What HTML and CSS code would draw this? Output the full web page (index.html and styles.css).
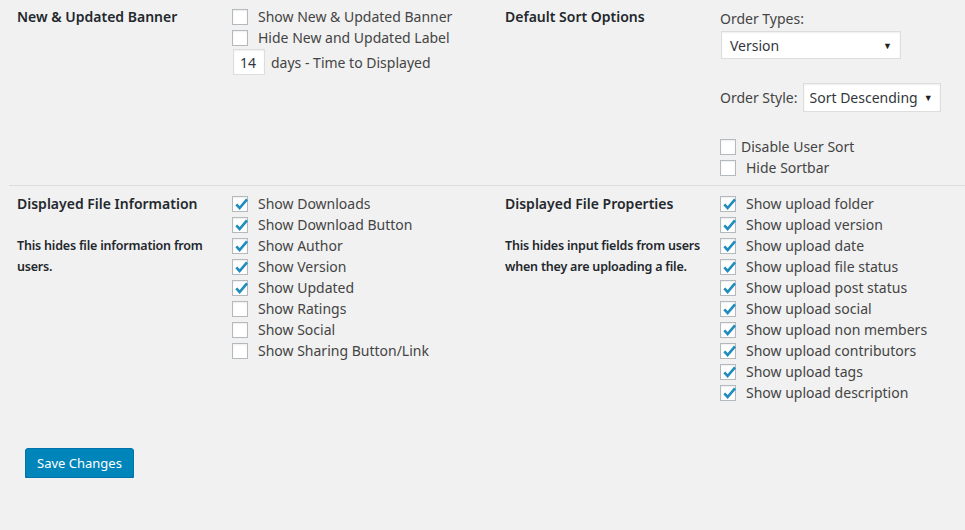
FILE: index.html
```html
<!DOCTYPE html>
<html lang="en">
<head>
  <meta charset="UTF-8" />
  <title>Settings</title>
  <link rel="stylesheet" href="styles.css">
</head>
<body>
  <form class="settings">
    <div class="row first">
      <div class="th">New &amp; Updated Banner</div>
      <div class="td">
        <label class="check"><span class="box"></span>Show New &amp; Updated Banner</label>
        <label class="check"><span class="box"></span>Hide New and Updated Label</label>
        <div class="days">
          <input type="text" class="small-input" value="14" />
          <span>days - Time to Displayed</span>
        </div>
      </div>
      <div class="th">Default Sort Options</div>
      <div class="td">
        <div class="field-label">Order Types:</div>
        <div class="select wide">Version<span class="arrow">&#9660;</span></div>
        <div class="order-style">
          <span>Order Style:</span>
          <div class="select">Sort Descending<span class="arrow">&#9660;</span></div>
        </div>
        <div class="sort-checks">
          <label class="check tight"><span class="box"></span>Disable User Sort</label>
          <label class="check"><span class="box"></span>Hide Sortbar</label>
        </div>
      </div>
    </div>

    <div class="row">
      <div class="th">
        Displayed File Information
        <p class="desc">This hides file information from users.</p>
      </div>
      <div class="td">
        <label class="check"><span class="box on"><svg viewBox="0 0 16 16"><path d="M3.3 7.4 L6.6 11 L14 2.3"/></svg></span>Show Downloads</label>
        <label class="check"><span class="box on"><svg viewBox="0 0 16 16"><path d="M3.3 7.4 L6.6 11 L14 2.3"/></svg></span>Show Download Button</label>
        <label class="check"><span class="box on"><svg viewBox="0 0 16 16"><path d="M3.3 7.4 L6.6 11 L14 2.3"/></svg></span>Show Author</label>
        <label class="check"><span class="box on"><svg viewBox="0 0 16 16"><path d="M3.3 7.4 L6.6 11 L14 2.3"/></svg></span>Show Version</label>
        <label class="check"><span class="box on"><svg viewBox="0 0 16 16"><path d="M3.3 7.4 L6.6 11 L14 2.3"/></svg></span>Show Updated</label>
        <label class="check"><span class="box"></span>Show Ratings</label>
        <label class="check"><span class="box"></span>Show Social</label>
        <label class="check"><span class="box"></span>Show Sharing Button/Link</label>
      </div>
      <div class="th">
        Displayed File Properties
        <p class="desc">This hides input fields from users when they are uploading a file.</p>
      </div>
      <div class="td">
        <label class="check"><span class="box on"><svg viewBox="0 0 16 16"><path d="M3.3 7.4 L6.6 11 L14 2.3"/></svg></span>Show upload folder</label>
        <label class="check"><span class="box on"><svg viewBox="0 0 16 16"><path d="M3.3 7.4 L6.6 11 L14 2.3"/></svg></span>Show upload version</label>
        <label class="check"><span class="box on"><svg viewBox="0 0 16 16"><path d="M3.3 7.4 L6.6 11 L14 2.3"/></svg></span>Show upload date</label>
        <label class="check"><span class="box on"><svg viewBox="0 0 16 16"><path d="M3.3 7.4 L6.6 11 L14 2.3"/></svg></span>Show upload file status</label>
        <label class="check"><span class="box on"><svg viewBox="0 0 16 16"><path d="M3.3 7.4 L6.6 11 L14 2.3"/></svg></span>Show upload post status</label>
        <label class="check"><span class="box on"><svg viewBox="0 0 16 16"><path d="M3.3 7.4 L6.6 11 L14 2.3"/></svg></span>Show upload social</label>
        <label class="check"><span class="box on"><svg viewBox="0 0 16 16"><path d="M3.3 7.4 L6.6 11 L14 2.3"/></svg></span>Show upload non members</label>
        <label class="check"><span class="box on"><svg viewBox="0 0 16 16"><path d="M3.3 7.4 L6.6 11 L14 2.3"/></svg></span>Show upload contributors</label>
        <label class="check"><span class="box on"><svg viewBox="0 0 16 16"><path d="M3.3 7.4 L6.6 11 L14 2.3"/></svg></span>Show upload tags</label>
        <label class="check"><span class="box on"><svg viewBox="0 0 16 16"><path d="M3.3 7.4 L6.6 11 L14 2.3"/></svg></span>Show upload description</label>
      </div>
    </div>

    <div class="actions">
      <button type="submit" class="button-primary">Save Changes</button>
    </div>
  </form>
</body>
</html>
```

FILE: styles.css
```css
* {
  margin: 0;
  padding: 0;
  box-sizing: border-box;
}

body {
  background: #f1f1f1;
  color: #444;
  font-family: 'Noto Sans', 'Open Sans', sans-serif;
  font-size: 14px;
  line-height: 21px;
}

.settings {
  padding-left: 9px;
}

.row {
  display: grid;
  grid-template-columns: 215px 273px 215px 1fr;
  padding: 7px 0 8px;
  border-top: 1px solid #ddd;
}

.row.first {
  border-top: none;
  padding: 6px 0 7px;
}

.th {
  padding-left: 8px;
  color: #23282d;
  font-weight: 600;
}

.td {
  padding-left: 8px;
}

.desc {
  margin-top: 21px;
  font-size: 12.5px;
  line-height: 21px;
  letter-spacing: -0.2px;
}

.check {
  display: flex;
  align-items: center;
  height: 21px;
  white-space: nowrap;
  cursor: pointer;
}

.box {
  width: 16px;
  height: 16px;
  margin-right: 10px;
  flex: none;
  background: #fff;
  border: 1px solid #b4b9be;
  box-shadow: inset 0 1px 2px rgba(0, 0, 0, 0.07);
  position: relative;
}

.box svg {
  position: absolute;
  left: 0;
  top: 0;
  width: 16px;
  height: 16px;
}

.box svg path {
  fill: none;
  stroke: #1e8cbe;
  stroke-width: 2.6;
}

.check.tight .box {
  margin-right: 5px;
}

.days {
  display: flex;
  align-items: center;
  margin-top: 1px;
}

.small-input {
  width: 32px;
  height: 26px;
  margin: 0 6px 0 1px;
  padding: 0 6px;
  border: 1px solid #ddd;
  box-shadow: inset 0 1px 2px rgba(0, 0, 0, 0.07);
  background: #fff;
  color: #32373c;
  font: inherit;
}

.field-label {
  padding-top: 2px;
}

.select {
  display: flex;
  align-items: center;
  justify-content: space-between;
  height: 29px;
  margin: 2px 0 0 1px;
  padding: 0 8px 0 6px;
  background: #fff;
  border: 1px solid #ddd;
  box-shadow: inset 0 1px 2px rgba(0, 0, 0, 0.07);
  color: #32373c;
  white-space: nowrap;
}

.select.wide {
  width: 180px;
  height: 28px;
  padding-left: 8px;
}

.arrow {
  font-size: 9px;
  color: #222;
  margin-left: 6px;
}

.order-style {
  display: flex;
  align-items: center;
  margin-top: 24px;
}

.order-style .select {
  width: 138px;
  margin: 0 0 0 5px;
}

.sort-checks {
  margin-top: 24px;
}

.actions {
  padding: 37px 0 0 16px;
}

.button-primary {
  height: 30px;
  padding: 0 11px;
  background: #0085ba;
  border: 1px solid #0073aa;
  border-radius: 3px;
  box-shadow: 0 1px 0 #006799;
  color: #fff;
  font-family: 'Noto Sans', 'Open Sans', sans-serif;
  font-size: 13px;
  cursor: pointer;
}

.button-primary:hover {
  background: #008ec2;
}
```
